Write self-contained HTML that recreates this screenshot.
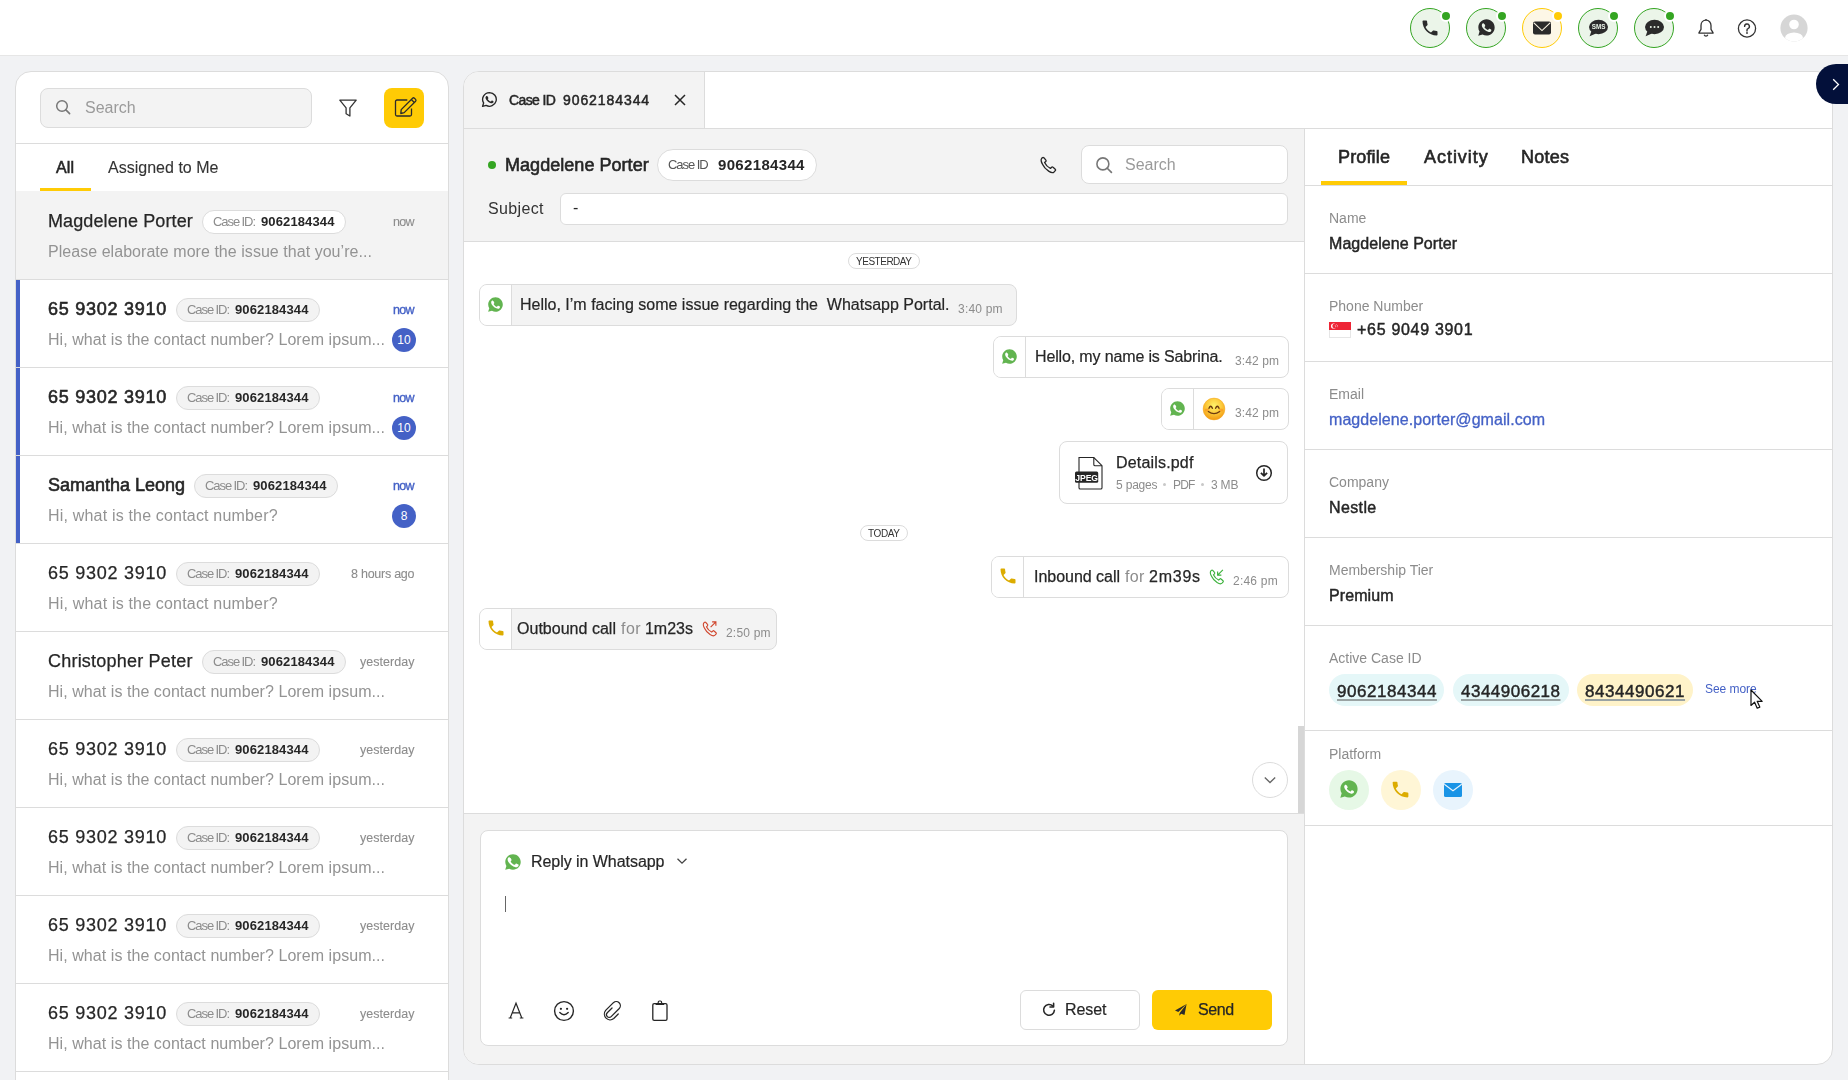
<!DOCTYPE html>
<html><head><meta charset="utf-8"><style>
html,body{margin:0;padding:0;}
body{width:1848px;height:1080px;overflow:hidden;position:relative;background:#f1f2f4;font-family:"Liberation Sans",sans-serif;}
.t{position:absolute;white-space:pre;line-height:1;will-change:transform;}
svg{overflow:visible;will-change:transform;}
</style></head><body>
<div style="position:absolute;left:0px;top:0px;width:1848px;height:55px;background:#fff;border-bottom:1px solid #e6e6e6;"></div>
<div style="position:absolute;left:1410px;top:8px;width:40px;height:40px;box-sizing:border-box;border:1.5px solid #34a522;border-radius:50%;background:#ebf5e9;"></div>
<div style="position:absolute;left:1440px;top:10px;width:12px;height:12px;box-sizing:border-box;border:2px solid #fff;border-radius:50%;background:#34a522;"></div>
<svg style="position:absolute;left:1420px;top:18px;" width="20" height="20" viewBox="0 0 24 24"><path d="M6.62 10.79c1.44 2.83 3.76 5.14 6.59 6.59l2.2-2.2c.27-.27.67-.36 1.02-.24 1.12.37 2.33.57 3.57.57.55 0 1 .45 1 1V20c0 .55-.45 1-1 1-9.39 0-17-7.61-17-17 0-.55.45-1 1-1h3.5c.55 0 1 .45 1 1 0 1.25.2 2.45.57 3.57.11.35.03.74-.25 1.02l-2.2 2.2z" fill="#2b2b2b"/></svg>
<div style="position:absolute;left:1466px;top:8px;width:40px;height:40px;box-sizing:border-box;border:1.5px solid #34a522;border-radius:50%;background:#ebf5e9;"></div>
<div style="position:absolute;left:1496px;top:10px;width:12px;height:12px;box-sizing:border-box;border:2px solid #fff;border-radius:50%;background:#34a522;"></div>
<svg style="position:absolute;left:1477px;top:18px;" width="19" height="19" viewBox="0 0 24 24"><path d="M12 1.6C6.3 1.6 1.7 6.2 1.7 11.9c0 1.9.5 3.7 1.5 5.3L1.6 22.4l5.4-1.5c1.5.8 3.2 1.3 5 1.3 5.7 0 10.3-4.6 10.3-10.3S17.7 1.6 12 1.6z" fill="#2b2b2b"/><path d="M8.4 6.6c.3 0 .5 0 .7.4.2.5.8 1.9.9 2.1.1.2.1.4 0 .6-.1.2-.2.4-.4.6-.2.2-.4.5-.5.6-.2.2-.3.3-.1.7.2.4.9 1.5 2 2.4 1.3 1.2 2.4 1.5 2.8 1.7.4.2.6.1.8-.1.2-.2.9-1 1.1-1.4.2-.4.5-.3.8-.2.3.1 2 .9 2.3 1.1.3.2.6.3.6.4.1.2.1.9-.2 1.7-.3.8-1.7 1.6-2.4 1.7-.6.1-1.4.1-2.3-.2-.5-.2-1.2-.4-2.1-.8-3.6-1.6-6-5.2-6.2-5.5-.2-.2-1.4-1.9-1.4-3.6 0-1.7.9-2.6 1.2-2.9.3-.3.7-.4.9-.4h.5z" fill="#ebf5e9" transform="translate(12 12) scale(0.82) translate(-12 -12)"/></svg>
<div style="position:absolute;left:1522px;top:8px;width:40px;height:40px;box-sizing:border-box;border:1.5px solid #ffcb05;border-radius:50%;background:#fdf7e6;"></div>
<div style="position:absolute;left:1552px;top:10px;width:12px;height:12px;box-sizing:border-box;border:2px solid #fff;border-radius:50%;background:#ffcb05;"></div>
<svg style="position:absolute;left:1533px;top:21px;" width="18" height="14" viewBox="0 0 18 14"><rect x="0" y="0.6" width="18" height="13" rx="2" fill="#2b2b2b"/><path d="M.9 1.8 9 9.6 17.1 1.8" stroke="#fdf7e6" stroke-width="1.1" fill="none"/></svg>
<div style="position:absolute;left:1578px;top:8px;width:40px;height:40px;box-sizing:border-box;border:1.5px solid #34a522;border-radius:50%;background:#ebf5e9;"></div>
<div style="position:absolute;left:1608px;top:10px;width:12px;height:12px;box-sizing:border-box;border:2px solid #fff;border-radius:50%;background:#34a522;"></div>
<svg style="position:absolute;left:1588px;top:19px;" width="20" height="18" viewBox="0 0 20 18"><ellipse cx="10.5" cy="8" rx="9.5" ry="7.2" fill="#2b2b2b"/><path d="M3.5 12 1.6 17.2 8 14.5z" fill="#2b2b2b"/><text x="10.6" y="10.3" font-family="Liberation Sans" font-weight="700" font-size="6.3" fill="#ebf5e9" text-anchor="middle">SMS</text></svg>
<div style="position:absolute;left:1634px;top:8px;width:40px;height:40px;box-sizing:border-box;border:1.5px solid #34a522;border-radius:50%;background:#ebf5e9;"></div>
<div style="position:absolute;left:1664px;top:10px;width:12px;height:12px;box-sizing:border-box;border:2px solid #fff;border-radius:50%;background:#34a522;"></div>
<svg style="position:absolute;left:1644px;top:19px;" width="20" height="18" viewBox="0 0 20 18"><ellipse cx="10.5" cy="8" rx="9.5" ry="7.2" fill="#2b2b2b"/><path d="M3.5 12 1.6 17.2 8 14.5z" fill="#2b2b2b"/><circle cx="6.8" cy="8" r="1" fill="#ebf5e9"/><circle cx="10.5" cy="8" r="1" fill="#ebf5e9"/><circle cx="14.2" cy="8" r="1" fill="#ebf5e9"/></svg>
<svg style="position:absolute;left:1697px;top:18px;" width="18" height="20" viewBox="0 0 18 20"><path d="M9 2.2c-3 0-5 2.3-5 5.3v3.8L2 14.6v.6h14v-.6l-2-3.3V7.5c0-3-2-5.3-5-5.3z" fill="none" stroke="#333" stroke-width="1.3" stroke-linejoin="round"/><path d="M9 1v1.2" stroke="#333" stroke-width="1.3"/><path d="M7.2 16.8a1.9 1.9 0 0 0 3.6 0" fill="none" stroke="#333" stroke-width="1.3"/></svg>
<svg style="position:absolute;left:1737px;top:19px;" width="20" height="19" viewBox="0 0 20 19"><circle cx="10" cy="9.5" r="8.6" fill="none" stroke="#333" stroke-width="1.3"/><path d="M7.6 7.4a2.4 2.4 0 1 1 3.4 2.2c-.7.3-1 .8-1 1.5v.9" fill="none" stroke="#333" stroke-width="1.4" stroke-linecap="round"/><circle cx="10" cy="14" r=".9" fill="#333"/></svg>
<svg style="position:absolute;left:1780px;top:14px;" width="28" height="28" viewBox="0 0 28 28"><defs><clipPath id="av"><circle cx="14" cy="14" r="13.6"/></clipPath></defs><circle cx="14" cy="14" r="13.6" fill="#d6d6d6"/><g clip-path="url(#av)"><circle cx="14" cy="10.5" r="4.8" fill="#fff"/><ellipse cx="14" cy="24" rx="9" ry="5.5" fill="#fff"/></g></svg>
<div style="position:absolute;left:15px;top:71px;width:434px;height:1100px;box-sizing:border-box;border:1px solid #dcdcdc;border-radius:16px;background:#fff;"></div>
<div style="position:absolute;left:40px;top:88px;width:272px;height:40px;box-sizing:border-box;border:1px solid #dcdcdc;border-radius:8px;background:#f3f3f3;"></div>
<svg style="position:absolute;left:55px;top:99px;" width="16" height="16" viewBox="0 0 16 16"><circle cx="7" cy="7" r="5.3" fill="none" stroke="#777" stroke-width="1.5"/><path d="M10.9 10.9 14.6 14.6" stroke="#777" stroke-width="1.6" stroke-linecap="round"/></svg>
<div class="t" style="left:85.00px;top:100.15px;font-size:16px;color:#9a9a9a;">Search</div>
<svg style="position:absolute;left:338px;top:98px;" width="20" height="20" viewBox="0 0 20 20"><path d="M1.8 2.2h16.4l-6.3 7.6v8.2l-3.8-2.2V9.8z" fill="none" stroke="#333" stroke-width="1.3" stroke-linejoin="round"/></svg>
<div style="position:absolute;left:384px;top:88px;width:40px;height:40px;border-radius:8px;background:#ffcb05;"></div>
<svg style="position:absolute;left:394px;top:96px;" width="24" height="22" viewBox="0 0 24 22"><path d="M13.3 4H3A1.5 1.5 0 0 0 1.5 5.5v13A1.5 1.5 0 0 0 3 20h13a1.5 1.5 0 0 0 1.5-1.5v-5.9" fill="none" stroke="#2b2b2b" stroke-width="1.3"/><path d="M7.2 13.6 18.6 2.2a1.3 1.3 0 0 1 1.8 0l1.2 1.2a1.3 1.3 0 0 1 0 1.8L10.2 16.6l-3.4.9z" fill="none" stroke="#2b2b2b" stroke-width="1.3" stroke-linejoin="round"/><path d="M17.3 3.5 20.3 6.5" stroke="#2b2b2b" stroke-width="1.2"/></svg>
<div style="position:absolute;left:15px;top:143px;width:434px;height:1px;background:#dcdcdc;"></div>
<div class="t" style="left:56.00px;top:160.45px;font-size:16px;color:#262626;-webkit-text-stroke:0.55px #262626;letter-spacing:0.100px;">All</div>
<div class="t" style="left:107.50px;top:160.45px;font-size:16px;color:#333;-webkit-text-stroke:0.1px #333;letter-spacing:0.015px;">Assigned to Me</div>
<div style="position:absolute;left:40px;top:188px;width:51px;height:4px;background:#ffcb05;"></div>
<div style="position:absolute;left:16px;top:191px;width:432px;height:88px;background:#f3f3f3;"></div>
<div style="position:absolute;left:16px;top:279px;width:432px;height:1px;background:#dcdcdc;"></div>
<div class="t" style="left:48.00px;top:212.36px;font-size:18px;color:#262626;-webkit-text-stroke:0.25px #262626;letter-spacing:0.113px;">Magdelene Porter</div>
<div style="position:absolute;left:202px;top:210px;width:144px;height:24px;box-sizing:border-box;border:1px solid #dcdcdc;border-radius:12px;background:#fff;"></div>
<div class="t" style="left:213.40px;top:215.09px;font-size:13px;color:#8c8c8c;letter-spacing:-1.079px;">Case ID:</div>
<div class="t" style="left:260.70px;top:215.09px;font-size:13px;color:#262626;font-weight:700;letter-spacing:0.122px;">9062184344</div>
<div class="t" style="left:393.30px;top:216.42px;font-size:12.5px;color:#8c8c8c;-webkit-text-stroke:0.1px #8c8c8c;letter-spacing:-0.750px;">now</div>
<div class="t" style="left:47.80px;top:244.25px;font-size:16px;color:#939393;letter-spacing:0.043px;">Please elaborate more the issue that you’re...</div>
<div style="position:absolute;left:16px;top:280px;width:432px;height:87px;background:#fff;"></div>
<div style="position:absolute;left:16px;top:367px;width:432px;height:1px;background:#dcdcdc;"></div>
<div style="position:absolute;left:16px;top:280px;width:4px;height:87px;background:#4461c6;"></div>
<div class="t" style="left:48.00px;top:300.36px;font-size:18px;color:#262626;-webkit-text-stroke:0.6px #262626;letter-spacing:0.736px;">65 9302 3910</div>
<div style="position:absolute;left:176px;top:298px;width:144px;height:24px;box-sizing:border-box;border:1px solid #dcdcdc;border-radius:12px;background:#f3f3f3;"></div>
<div class="t" style="left:187.40px;top:303.09px;font-size:13px;color:#8c8c8c;letter-spacing:-1.079px;">Case ID:</div>
<div class="t" style="left:234.70px;top:303.09px;font-size:13px;color:#262626;font-weight:700;letter-spacing:0.122px;">9062184344</div>
<div class="t" style="left:393.30px;top:304.42px;font-size:12.5px;color:#4461c6;-webkit-text-stroke:0.35px #4461c6;letter-spacing:-0.750px;">now</div>
<div class="t" style="left:47.80px;top:332.25px;font-size:16px;color:#939393;letter-spacing:0.059px;">Hi, what is the contact number? Lorem ipsum...</div>
<div style="position:absolute;left:392px;top:328px;width:24px;height:24px;border-radius:50%;background:#4461c6;color:#fff;font-size:12px;line-height:24px;text-align:center;">10</div>
<div style="position:absolute;left:16px;top:368px;width:432px;height:87px;background:#fff;"></div>
<div style="position:absolute;left:16px;top:455px;width:432px;height:1px;background:#dcdcdc;"></div>
<div style="position:absolute;left:16px;top:368px;width:4px;height:87px;background:#4461c6;"></div>
<div class="t" style="left:48.00px;top:388.36px;font-size:18px;color:#262626;-webkit-text-stroke:0.6px #262626;letter-spacing:0.736px;">65 9302 3910</div>
<div style="position:absolute;left:176px;top:386px;width:144px;height:24px;box-sizing:border-box;border:1px solid #dcdcdc;border-radius:12px;background:#f3f3f3;"></div>
<div class="t" style="left:187.40px;top:391.09px;font-size:13px;color:#8c8c8c;letter-spacing:-1.079px;">Case ID:</div>
<div class="t" style="left:234.70px;top:391.09px;font-size:13px;color:#262626;font-weight:700;letter-spacing:0.122px;">9062184344</div>
<div class="t" style="left:393.30px;top:392.42px;font-size:12.5px;color:#4461c6;-webkit-text-stroke:0.35px #4461c6;letter-spacing:-0.750px;">now</div>
<div class="t" style="left:47.80px;top:420.25px;font-size:16px;color:#939393;letter-spacing:0.059px;">Hi, what is the contact number? Lorem ipsum...</div>
<div style="position:absolute;left:392px;top:416px;width:24px;height:24px;border-radius:50%;background:#4461c6;color:#fff;font-size:12px;line-height:24px;text-align:center;">10</div>
<div style="position:absolute;left:16px;top:456px;width:432px;height:87px;background:#fff;"></div>
<div style="position:absolute;left:16px;top:543px;width:432px;height:1px;background:#dcdcdc;"></div>
<div style="position:absolute;left:16px;top:456px;width:4px;height:87px;background:#4461c6;"></div>
<div class="t" style="left:48.00px;top:476.36px;font-size:18px;color:#262626;-webkit-text-stroke:0.6px #262626;">Samantha Leong</div>
<div style="position:absolute;left:194px;top:474px;width:144px;height:24px;box-sizing:border-box;border:1px solid #dcdcdc;border-radius:12px;background:#f3f3f3;"></div>
<div class="t" style="left:205.40px;top:479.09px;font-size:13px;color:#8c8c8c;letter-spacing:-1.079px;">Case ID:</div>
<div class="t" style="left:252.70px;top:479.09px;font-size:13px;color:#262626;font-weight:700;letter-spacing:0.122px;">9062184344</div>
<div class="t" style="left:393.30px;top:480.42px;font-size:12.5px;color:#4461c6;-webkit-text-stroke:0.35px #4461c6;letter-spacing:-0.750px;">now</div>
<div class="t" style="left:47.80px;top:508.25px;font-size:16px;color:#939393;letter-spacing:0.183px;">Hi, what is the contact number?</div>
<div style="position:absolute;left:392px;top:504px;width:24px;height:24px;border-radius:50%;background:#4461c6;color:#fff;font-size:12px;line-height:24px;text-align:center;">8</div>
<div style="position:absolute;left:16px;top:544px;width:432px;height:87px;background:#fff;"></div>
<div style="position:absolute;left:16px;top:631px;width:432px;height:1px;background:#dcdcdc;"></div>
<div class="t" style="left:48.00px;top:564.36px;font-size:18px;color:#262626;-webkit-text-stroke:0.25px #262626;letter-spacing:0.736px;">65 9302 3910</div>
<div style="position:absolute;left:176px;top:562px;width:144px;height:24px;box-sizing:border-box;border:1px solid #dcdcdc;border-radius:12px;background:#f3f3f3;"></div>
<div class="t" style="left:187.40px;top:567.09px;font-size:13px;color:#8c8c8c;letter-spacing:-1.079px;">Case ID:</div>
<div class="t" style="left:234.70px;top:567.09px;font-size:13px;color:#262626;font-weight:700;letter-spacing:0.122px;">9062184344</div>
<div class="t" style="left:351.30px;top:568.42px;font-size:12.5px;color:#8c8c8c;-webkit-text-stroke:0.1px #8c8c8c;letter-spacing:-0.250px;">8 hours ago</div>
<div class="t" style="left:47.80px;top:596.25px;font-size:16px;color:#939393;letter-spacing:0.183px;">Hi, what is the contact number?</div>
<div style="position:absolute;left:16px;top:632px;width:432px;height:87px;background:#fff;"></div>
<div style="position:absolute;left:16px;top:719px;width:432px;height:1px;background:#dcdcdc;"></div>
<div class="t" style="left:48.00px;top:652.36px;font-size:18px;color:#262626;-webkit-text-stroke:0.25px #262626;letter-spacing:0.209px;">Christopher Peter</div>
<div style="position:absolute;left:202px;top:650px;width:144px;height:24px;box-sizing:border-box;border:1px solid #dcdcdc;border-radius:12px;background:#f3f3f3;"></div>
<div class="t" style="left:213.40px;top:655.09px;font-size:13px;color:#8c8c8c;letter-spacing:-1.079px;">Case ID:</div>
<div class="t" style="left:260.70px;top:655.09px;font-size:13px;color:#262626;font-weight:700;letter-spacing:0.122px;">9062184344</div>
<div class="t" style="left:360.40px;top:656.42px;font-size:12.5px;color:#8c8c8c;-webkit-text-stroke:0.1px #8c8c8c;letter-spacing:0.025px;">yesterday</div>
<div class="t" style="left:47.80px;top:684.25px;font-size:16px;color:#939393;letter-spacing:0.059px;">Hi, what is the contact number? Lorem ipsum...</div>
<div style="position:absolute;left:16px;top:720px;width:432px;height:87px;background:#fff;"></div>
<div style="position:absolute;left:16px;top:807px;width:432px;height:1px;background:#dcdcdc;"></div>
<div class="t" style="left:48.00px;top:740.36px;font-size:18px;color:#262626;-webkit-text-stroke:0.25px #262626;letter-spacing:0.736px;">65 9302 3910</div>
<div style="position:absolute;left:176px;top:738px;width:144px;height:24px;box-sizing:border-box;border:1px solid #dcdcdc;border-radius:12px;background:#f3f3f3;"></div>
<div class="t" style="left:187.40px;top:743.09px;font-size:13px;color:#8c8c8c;letter-spacing:-1.079px;">Case ID:</div>
<div class="t" style="left:234.70px;top:743.09px;font-size:13px;color:#262626;font-weight:700;letter-spacing:0.122px;">9062184344</div>
<div class="t" style="left:360.40px;top:744.42px;font-size:12.5px;color:#8c8c8c;-webkit-text-stroke:0.1px #8c8c8c;letter-spacing:0.025px;">yesterday</div>
<div class="t" style="left:47.80px;top:772.25px;font-size:16px;color:#939393;letter-spacing:0.059px;">Hi, what is the contact number? Lorem ipsum...</div>
<div style="position:absolute;left:16px;top:808px;width:432px;height:87px;background:#fff;"></div>
<div style="position:absolute;left:16px;top:895px;width:432px;height:1px;background:#dcdcdc;"></div>
<div class="t" style="left:48.00px;top:828.36px;font-size:18px;color:#262626;-webkit-text-stroke:0.25px #262626;letter-spacing:0.736px;">65 9302 3910</div>
<div style="position:absolute;left:176px;top:826px;width:144px;height:24px;box-sizing:border-box;border:1px solid #dcdcdc;border-radius:12px;background:#f3f3f3;"></div>
<div class="t" style="left:187.40px;top:831.09px;font-size:13px;color:#8c8c8c;letter-spacing:-1.079px;">Case ID:</div>
<div class="t" style="left:234.70px;top:831.09px;font-size:13px;color:#262626;font-weight:700;letter-spacing:0.122px;">9062184344</div>
<div class="t" style="left:360.40px;top:832.42px;font-size:12.5px;color:#8c8c8c;-webkit-text-stroke:0.1px #8c8c8c;letter-spacing:0.025px;">yesterday</div>
<div class="t" style="left:47.80px;top:860.25px;font-size:16px;color:#939393;letter-spacing:0.059px;">Hi, what is the contact number? Lorem ipsum...</div>
<div style="position:absolute;left:16px;top:896px;width:432px;height:87px;background:#fff;"></div>
<div style="position:absolute;left:16px;top:983px;width:432px;height:1px;background:#dcdcdc;"></div>
<div class="t" style="left:48.00px;top:916.36px;font-size:18px;color:#262626;-webkit-text-stroke:0.25px #262626;letter-spacing:0.736px;">65 9302 3910</div>
<div style="position:absolute;left:176px;top:914px;width:144px;height:24px;box-sizing:border-box;border:1px solid #dcdcdc;border-radius:12px;background:#f3f3f3;"></div>
<div class="t" style="left:187.40px;top:919.09px;font-size:13px;color:#8c8c8c;letter-spacing:-1.079px;">Case ID:</div>
<div class="t" style="left:234.70px;top:919.09px;font-size:13px;color:#262626;font-weight:700;letter-spacing:0.122px;">9062184344</div>
<div class="t" style="left:360.40px;top:920.42px;font-size:12.5px;color:#8c8c8c;-webkit-text-stroke:0.1px #8c8c8c;letter-spacing:0.025px;">yesterday</div>
<div class="t" style="left:47.80px;top:948.25px;font-size:16px;color:#939393;letter-spacing:0.059px;">Hi, what is the contact number? Lorem ipsum...</div>
<div style="position:absolute;left:16px;top:984px;width:432px;height:87px;background:#fff;"></div>
<div style="position:absolute;left:16px;top:1071px;width:432px;height:1px;background:#dcdcdc;"></div>
<div class="t" style="left:48.00px;top:1004.36px;font-size:18px;color:#262626;-webkit-text-stroke:0.25px #262626;letter-spacing:0.736px;">65 9302 3910</div>
<div style="position:absolute;left:176px;top:1002px;width:144px;height:24px;box-sizing:border-box;border:1px solid #dcdcdc;border-radius:12px;background:#f3f3f3;"></div>
<div class="t" style="left:187.40px;top:1007.09px;font-size:13px;color:#8c8c8c;letter-spacing:-1.079px;">Case ID:</div>
<div class="t" style="left:234.70px;top:1007.09px;font-size:13px;color:#262626;font-weight:700;letter-spacing:0.122px;">9062184344</div>
<div class="t" style="left:360.40px;top:1008.42px;font-size:12.5px;color:#8c8c8c;-webkit-text-stroke:0.1px #8c8c8c;letter-spacing:0.025px;">yesterday</div>
<div class="t" style="left:47.80px;top:1036.25px;font-size:16px;color:#939393;letter-spacing:0.059px;">Hi, what is the contact number? Lorem ipsum...</div>
<div style="position:absolute;left:463px;top:71px;width:1370px;height:994px;box-sizing:border-box;border:1px solid #dcdcdc;border-radius:16px;background:#fff;overflow:hidden;">
<div style="position:absolute;left:-1px;top:-1px;width:241px;height:57px;background:#f3f3f3;border-right:1px solid #dcdcdc;"></div>
<div style="position:absolute;left:-1px;top:56px;width:1370px;height:1px;background:#dcdcdc;"></div>
<svg style="position:absolute;left:17px;top:19px;" width="17" height="17" viewBox="0 0 24 24"><path d="M12 2.2a9.7 9.7 0 0 0-8.3 14.7L2.2 21.8l5-1.4A9.7 9.7 0 1 0 12 2.2z" fill="none" stroke="#262626" stroke-width="1.9" stroke-linejoin="round"/><path d="M8.4 6.6c.3 0 .5 0 .7.4.2.5.8 1.9.9 2.1.1.2.1.4 0 .6-.1.2-.2.4-.4.6-.2.2-.4.5-.5.6-.2.2-.3.3-.1.7.2.4.9 1.5 2 2.4 1.3 1.2 2.4 1.5 2.8 1.7.4.2.6.1.8-.1.2-.2.9-1 1.1-1.4.2-.4.5-.3.8-.2.3.1 2 .9 2.3 1.1.3.2.6.3.6.4.1.2.1.9-.2 1.7-.3.8-1.7 1.6-2.4 1.7-.6.1-1.4.1-2.3-.2-.5-.2-1.2-.4-2.1-.8-3.6-1.6-6-5.2-6.2-5.5-.2-.2-1.4-1.9-1.4-3.6 0-1.7.9-2.6 1.2-2.9.3-.3.7-.4.9-.4h.5z" fill="#262626" transform="translate(12 12) scale(.78) translate(-12 -12)"/></svg>
<div class="t" style="left:44.50px;top:20.95px;font-size:14px;color:#262626;-webkit-text-stroke:0.5px #262626;letter-spacing:-0.625px;">Case ID</div>
<div class="t" style="left:98.60px;top:20.95px;font-size:14px;color:#262626;-webkit-text-stroke:0.5px #262626;letter-spacing:0.917px;">9062184344</div>
<svg style="position:absolute;left:210px;top:22px;" width="12" height="12" viewBox="0 0 12 12"><path d="M1 1 11 11M11 1 1 11" stroke="#262626" stroke-width="1.5"/></svg>
<div style="position:absolute;left:-1px;top:57px;width:841px;height:112px;background:#f3f3f3;"></div>
<div style="position:absolute;left:-1px;top:169px;width:841px;height:1px;background:#dcdcdc;"></div>
<div style="position:absolute;left:24px;top:89px;width:8px;height:8px;border-radius:50%;background:#34a522;"></div>
<div class="t" style="left:40.80px;top:83.56px;font-size:18px;color:#262626;-webkit-text-stroke:0.6px #262626;letter-spacing:0.040px;">Magdelene Porter</div>
<div style="position:absolute;left:193px;top:77px;width:160px;height:32px;box-sizing:border-box;border:1px solid #dcdcdc;border-radius:16px;background:#fff;"></div>
<div class="t" style="left:204.40px;top:85.79px;font-size:13px;color:#555;letter-spacing:-1.058px;">Case ID</div>
<div class="t" style="left:254.40px;top:84.60px;font-size:15px;color:#262626;font-weight:700;letter-spacing:0.333px;">9062184344</div>
<svg style="position:absolute;left:574px;top:83px;" width="20" height="20" viewBox="0 0 24 24"><path d="M5.2 3.3c.5-.5 1.3-.5 1.8 0l2.3 2.6c.5.5.5 1.3 0 1.8L7.9 9.1c1.3 2.8 4.2 5.8 7 7l1.4-1.4c.5-.5 1.3-.5 1.8 0l2.6 2.3c.5.5.5 1.3 0 1.8l-1.4 1.5c-1 1-3.3 1.2-6.5-.9C9.5 17.1 6.9 14.5 5.6 11.4 3.6 8 3.7 5.1 4.3 4.2z" fill="none" stroke="#262626" stroke-width="1.6" stroke-linejoin="round"/></svg>
<div style="position:absolute;left:617px;top:73px;width:207px;height:39px;box-sizing:border-box;border:1px solid #dcdcdc;border-radius:8px;background:#fff;"></div>
<svg style="position:absolute;left:631px;top:84px;" width="18" height="18" viewBox="0 0 16 16"><circle cx="7" cy="7" r="5.3" fill="none" stroke="#777" stroke-width="1.4"/><path d="M10.9 10.9 14.6 14.6" stroke="#777" stroke-width="1.5" stroke-linecap="round"/></svg>
<div class="t" style="left:660.50px;top:84.95px;font-size:16px;color:#9a9a9a;">Search</div>
<div class="t" style="left:24.00px;top:128.75px;font-size:16px;color:#333;letter-spacing:0.342px;">Subject</div>
<div style="position:absolute;left:96px;top:121px;width:728px;height:32px;box-sizing:border-box;border:1px solid #dcdcdc;border-radius:6px;background:#fff;"></div>
<div class="t" style="left:109.00px;top:128.45px;font-size:16px;color:#262626;">-</div>
<div style="position:absolute;left:384px;top:181px;width:72px;height:16px;box-sizing:border-box;border:1px solid #dcdcdc;border-radius:8px;background:#fff;"></div>
<div class="t" style="left:392.00px;top:184.53px;font-size:10px;color:#333;letter-spacing:-0.481px;">YESTERDAY</div>
<div style="position:absolute;left:396px;top:453px;width:48px;height:16px;box-sizing:border-box;border:1px solid #dcdcdc;border-radius:8px;background:#fff;"></div>
<div class="t" style="left:404.00px;top:456.53px;font-size:10px;color:#333;letter-spacing:-0.387px;">TODAY</div>
<div style="position:absolute;left:15px;top:212px;width:538px;height:42px;box-sizing:border-box;border:1px solid #dcdcdc;border-radius:8px;background:#f3f3f3;overflow:hidden;"><div style="position:absolute;left:0;top:0;width:31px;height:100%;background:#fff;border-right:1px solid #dcdcdc;"></div></div>
<svg style="position:absolute;left:23px;top:224px;" width="17" height="17" viewBox="0 0 24 24"><path d="M12 1.6C6.3 1.6 1.7 6.2 1.7 11.9c0 1.9.5 3.7 1.5 5.3L1.6 22.4l5.4-1.5c1.5.8 3.2 1.3 5 1.3 5.7 0 10.3-4.6 10.3-10.3S17.7 1.6 12 1.6z" fill="#62b450"/><path d="M8.4 6.6c.3 0 .5 0 .7.4.2.5.8 1.9.9 2.1.1.2.1.4 0 .6-.1.2-.2.4-.4.6-.2.2-.4.5-.5.6-.2.2-.3.3-.1.7.2.4.9 1.5 2 2.4 1.3 1.2 2.4 1.5 2.8 1.7.4.2.6.1.8-.1.2-.2.9-1 1.1-1.4.2-.4.5-.3.8-.2.3.1 2 .9 2.3 1.1.3.2.6.3.6.4.1.2.1.9-.2 1.7-.3.8-1.7 1.6-2.4 1.7-.6.1-1.4.1-2.3-.2-.5-.2-1.2-.4-2.1-.8-3.6-1.6-6-5.2-6.2-5.5-.2-.2-1.4-1.9-1.4-3.6 0-1.7.9-2.6 1.2-2.9.3-.3.7-.4.9-.4h.5z" fill="#fff" transform="translate(12 12) scale(0.85) translate(-12 -12)"/></svg>
<div class="t" style="left:56.30px;top:225.05px;font-size:16px;color:#262626;-webkit-text-stroke:0.2px #262626;">Hello, I’m facing some issue regarding the  Whatsapp Portal.</div>
<div class="t" style="left:494.40px;top:230.84px;font-size:12px;color:#8c8c8c;letter-spacing:0.208px;">3:40 pm</div>
<div style="position:absolute;left:529px;top:264px;width:296px;height:42px;box-sizing:border-box;border:1px solid #dcdcdc;border-radius:8px;background:#fff;overflow:hidden;"><div style="position:absolute;left:0;top:0;width:31px;height:100%;background:#fff;border-right:1px solid #dcdcdc;"></div></div>
<svg style="position:absolute;left:537px;top:276px;" width="17" height="17" viewBox="0 0 24 24"><path d="M12 1.6C6.3 1.6 1.7 6.2 1.7 11.9c0 1.9.5 3.7 1.5 5.3L1.6 22.4l5.4-1.5c1.5.8 3.2 1.3 5 1.3 5.7 0 10.3-4.6 10.3-10.3S17.7 1.6 12 1.6z" fill="#62b450"/><path d="M8.4 6.6c.3 0 .5 0 .7.4.2.5.8 1.9.9 2.1.1.2.1.4 0 .6-.1.2-.2.4-.4.6-.2.2-.4.5-.5.6-.2.2-.3.3-.1.7.2.4.9 1.5 2 2.4 1.3 1.2 2.4 1.5 2.8 1.7.4.2.6.1.8-.1.2-.2.9-1 1.1-1.4.2-.4.5-.3.8-.2.3.1 2 .9 2.3 1.1.3.2.6.3.6.4.1.2.1.9-.2 1.7-.3.8-1.7 1.6-2.4 1.7-.6.1-1.4.1-2.3-.2-.5-.2-1.2-.4-2.1-.8-3.6-1.6-6-5.2-6.2-5.5-.2-.2-1.4-1.9-1.4-3.6 0-1.7.9-2.6 1.2-2.9.3-.3.7-.4.9-.4h.5z" fill="#fff" transform="translate(12 12) scale(0.85) translate(-12 -12)"/></svg>
<div class="t" style="left:570.60px;top:277.05px;font-size:16px;color:#262626;-webkit-text-stroke:0.2px #262626;letter-spacing:-0.144px;">Hello, my name is Sabrina.</div>
<div class="t" style="left:770.60px;top:282.84px;font-size:12px;color:#8c8c8c;letter-spacing:0.125px;">3:42 pm</div>
<div style="position:absolute;left:697px;top:316px;width:128px;height:42px;box-sizing:border-box;border:1px solid #dcdcdc;border-radius:8px;background:#fff;overflow:hidden;"><div style="position:absolute;left:0;top:0;width:31px;height:100%;background:#fff;border-right:1px solid #dcdcdc;"></div></div>
<svg style="position:absolute;left:705px;top:328px;" width="17" height="17" viewBox="0 0 24 24"><path d="M12 1.6C6.3 1.6 1.7 6.2 1.7 11.9c0 1.9.5 3.7 1.5 5.3L1.6 22.4l5.4-1.5c1.5.8 3.2 1.3 5 1.3 5.7 0 10.3-4.6 10.3-10.3S17.7 1.6 12 1.6z" fill="#62b450"/><path d="M8.4 6.6c.3 0 .5 0 .7.4.2.5.8 1.9.9 2.1.1.2.1.4 0 .6-.1.2-.2.4-.4.6-.2.2-.4.5-.5.6-.2.2-.3.3-.1.7.2.4.9 1.5 2 2.4 1.3 1.2 2.4 1.5 2.8 1.7.4.2.6.1.8-.1.2-.2.9-1 1.1-1.4.2-.4.5-.3.8-.2.3.1 2 .9 2.3 1.1.3.2.6.3.6.4.1.2.1.9-.2 1.7-.3.8-1.7 1.6-2.4 1.7-.6.1-1.4.1-2.3-.2-.5-.2-1.2-.4-2.1-.8-3.6-1.6-6-5.2-6.2-5.5-.2-.2-1.4-1.9-1.4-3.6 0-1.7.9-2.6 1.2-2.9.3-.3.7-.4.9-.4h.5z" fill="#fff" transform="translate(12 12) scale(0.85) translate(-12 -12)"/></svg>
<svg style="position:absolute;left:738px;top:325px;" width="24" height="24" viewBox="0 0 24 24"><defs><radialGradient id="emg" cx="50%" cy="35%" r="65%"><stop offset="0" stop-color="#fff36b"/><stop offset=".55" stop-color="#fcc93a"/><stop offset="1" stop-color="#f29a12"/></radialGradient></defs><circle cx="12" cy="12" r="10.9" fill="url(#emg)" stroke="#f4a51c" stroke-width=".5"/><ellipse cx="5" cy="13" rx="2.2" ry="1.5" fill="#f7891a" opacity=".55"/><ellipse cx="19" cy="13" rx="2.2" ry="1.5" fill="#f7891a" opacity=".55"/><path d="M7 11.3q1.7-4 3.4 0M13.6 11.3q1.7-4 3.4 0" stroke="#6b3a0f" stroke-width="1.4" fill="none" stroke-linecap="round"/><path d="M6.3 14.6q5.7 4.2 11.4 0" stroke="#6b3a0f" stroke-width="1.3" fill="none" stroke-linecap="round"/></svg>
<div class="t" style="left:770.60px;top:334.74px;font-size:12px;color:#8c8c8c;letter-spacing:0.125px;">3:42 pm</div>
<div style="position:absolute;left:595px;top:369px;width:229px;height:63px;box-sizing:border-box;border:1px solid #dcdcdc;border-radius:8px;background:#fff;"></div>
<svg style="position:absolute;left:610px;top:384px;" width="30" height="34" viewBox="0 0 30 34"><path d="M5 1.5h14.8l8.2 8.2v22c0 .7-.6 1.3-1.3 1.3H6.3c-.7 0-1.3-.6-1.3-1.3z" fill="#fff" stroke="#262626" stroke-width="1.1"/><path d="M19.8 1.5v6.9c0 .7.6 1.3 1.3 1.3H28" fill="none" stroke="#262626" stroke-width="1.1"/><rect x="1" y="15.6" width="23.2" height="11.2" rx="1.5" fill="#262626"/><text x="12.6" y="24.5" font-family="Liberation Sans" font-weight="700" font-size="8.6" fill="#fff" text-anchor="middle">JPEG</text></svg>
<div class="t" style="left:651.60px;top:383.15px;font-size:16px;color:#262626;-webkit-text-stroke:0.25px #262626;letter-spacing:0.175px;">Details.pdf</div>
<div class="t" style="left:651.60px;top:407.04px;font-size:12px;color:#8c8c8c;letter-spacing:-0.183px;">5 pages</div>
<div style="position:absolute;left:699px;top:411px;width:3px;height:3px;border-radius:50%;background:#c8c8c8;"></div>
<div class="t" style="left:709.40px;top:407.04px;font-size:12px;color:#8c8c8c;letter-spacing:-0.850px;">PDF</div>
<div style="position:absolute;left:737px;top:411px;width:3px;height:3px;border-radius:50%;background:#c8c8c8;"></div>
<div class="t" style="left:747.30px;top:407.04px;font-size:12px;color:#8c8c8c;letter-spacing:-0.200px;">3 MB</div>
<svg style="position:absolute;left:791px;top:392px;" width="18" height="18" viewBox="0 0 18 18"><circle cx="9" cy="9" r="7.3" fill="none" stroke="#262626" stroke-width="1.5"/><path d="M9 4.6v7.2M5.9 8.8 9 11.9l3.1-3.1" fill="none" stroke="#262626" stroke-width="1.7" stroke-linejoin="round"/></svg>
<div style="position:absolute;left:527px;top:484px;width:298px;height:42px;box-sizing:border-box;border:1px solid #dcdcdc;border-radius:8px;background:#fff;overflow:hidden;"><div style="position:absolute;left:0;top:0;width:31px;height:100%;background:#fff;border-right:1px solid #dcdcdc;"></div></div>
<svg style="position:absolute;left:534px;top:494px;" width="20" height="20" viewBox="0 0 24 24"><path d="M6.62 10.79c1.44 2.83 3.76 5.14 6.59 6.59l2.2-2.2c.27-.27.67-.36 1.02-.24 1.12.37 2.33.57 3.57.57.55 0 1 .45 1 1V20c0 .55-.45 1-1 1-9.39 0-17-7.61-17-17 0-.55.45-1 1-1h3.5c.55 0 1 .45 1 1 0 1.25.2 2.45.57 3.57.11.35.03.74-.25 1.02l-2.2 2.2z" fill="#dcac00"/></svg>
<div class="t" style="left:570.00px;top:497.45px;font-size:16px;color:#262626;-webkit-text-stroke:0.25px #262626;letter-spacing:-0.027px;">Inbound call</div>
<div class="t" style="left:660.60px;top:497.45px;font-size:16px;color:#8c8c8c;letter-spacing:0.375px;">for</div>
<div class="t" style="left:684.60px;top:497.45px;font-size:16px;color:#262626;-webkit-text-stroke:0.25px #262626;letter-spacing:0.775px;">2m39s</div>
<svg style="position:absolute;left:743px;top:496px;" width="19" height="18" viewBox="0 0 24 24"><path d="M5.2 3.3c.5-.5 1.3-.5 1.8 0l2.3 2.6c.5.5.5 1.3 0 1.8L7.9 9.1c1.3 2.8 4.2 5.8 7 7l1.4-1.4c.5-.5 1.3-.5 1.8 0l2.6 2.3c.5.5.5 1.3 0 1.8l-1.4 1.5c-1 1-3.3 1.2-6.5-.9C9.5 17.1 6.9 14.5 5.6 11.4 3.6 8 3.7 5.1 4.3 4.2z" fill="none" stroke="#3bb13b" stroke-width="1.5" stroke-linejoin="round"/><path d="M20.5 2.5 13.5 9.5M13.5 4.5v5h5" fill="none" stroke="#3bb13b" stroke-width="1.5"/></svg>
<div class="t" style="left:769.00px;top:503.04px;font-size:12px;color:#8c8c8c;letter-spacing:0.225px;">2:46 pm</div>
<div style="position:absolute;left:15px;top:536px;width:298px;height:42px;box-sizing:border-box;border:1px solid #dcdcdc;border-radius:8px;background:#f3f3f3;overflow:hidden;"><div style="position:absolute;left:0;top:0;width:31px;height:100%;background:#fff;border-right:1px solid #dcdcdc;"></div></div>
<svg style="position:absolute;left:22px;top:546px;" width="20" height="20" viewBox="0 0 24 24"><path d="M6.62 10.79c1.44 2.83 3.76 5.14 6.59 6.59l2.2-2.2c.27-.27.67-.36 1.02-.24 1.12.37 2.33.57 3.57.57.55 0 1 .45 1 1V20c0 .55-.45 1-1 1-9.39 0-17-7.61-17-17 0-.55.45-1 1-1h3.5c.55 0 1 .45 1 1 0 1.25.2 2.45.57 3.57.11.35.03.74-.25 1.02l-2.2 2.2z" fill="#dcac00"/></svg>
<div class="t" style="left:53.00px;top:548.85px;font-size:16px;color:#262626;-webkit-text-stroke:0.25px #262626;letter-spacing:0.021px;">Outbound call</div>
<div class="t" style="left:156.60px;top:548.85px;font-size:16px;color:#8c8c8c;letter-spacing:0.475px;">for</div>
<div class="t" style="left:180.80px;top:548.85px;font-size:16px;color:#262626;-webkit-text-stroke:0.25px #262626;letter-spacing:-0.025px;">1m23s</div>
<svg style="position:absolute;left:236px;top:548px;" width="19" height="18" viewBox="0 0 24 24"><path d="M5.2 3.3c.5-.5 1.3-.5 1.8 0l2.3 2.6c.5.5.5 1.3 0 1.8L7.9 9.1c1.3 2.8 4.2 5.8 7 7l1.4-1.4c.5-.5 1.3-.5 1.8 0l2.6 2.3c.5.5.5 1.3 0 1.8l-1.4 1.5c-1 1-3.3 1.2-6.5-.9C9.5 17.1 6.9 14.5 5.6 11.4 3.6 8 3.7 5.1 4.3 4.2z" fill="none" stroke="#d0452c" stroke-width="1.5" stroke-linejoin="round"/><path d="M13.5 9.5 20.5 2.5M15.5 2.5h5v5" fill="none" stroke="#d0452c" stroke-width="1.5"/></svg>
<div class="t" style="left:261.80px;top:554.74px;font-size:12px;color:#8c8c8c;letter-spacing:0.192px;">2:50 pm</div>
<div style="position:absolute;left:788px;top:690px;width:36px;height:36px;box-sizing:border-box;border:1px solid #dcdcdc;border-radius:50%;background:#fff;"></div>
<svg style="position:absolute;left:800px;top:703px;" width="12" height="10" viewBox="0 0 12 10"><path d="M.8 2.5 6 7.5l5.2-5" fill="none" stroke="#666" stroke-width="1.3"/></svg>
<div style="position:absolute;left:834px;top:654px;width:6px;height:87px;background:#d6d6d6;"></div>
<div style="position:absolute;left:-1px;top:741px;width:841px;height:1px;background:#dcdcdc;"></div>
<div style="position:absolute;left:-1px;top:742px;width:841px;height:250px;background:#f3f3f3;"></div>
<div style="position:absolute;left:16px;top:758px;width:808px;height:216px;box-sizing:border-box;border:1px solid #dcdcdc;border-radius:8px;background:#fff;"></div>
<svg style="position:absolute;left:40px;top:781px;" width="18" height="18" viewBox="0 0 24 24"><path d="M12 1.6C6.3 1.6 1.7 6.2 1.7 11.9c0 1.9.5 3.7 1.5 5.3L1.6 22.4l5.4-1.5c1.5.8 3.2 1.3 5 1.3 5.7 0 10.3-4.6 10.3-10.3S17.7 1.6 12 1.6z" fill="#62b450"/><path d="M8.4 6.6c.3 0 .5 0 .7.4.2.5.8 1.9.9 2.1.1.2.1.4 0 .6-.1.2-.2.4-.4.6-.2.2-.4.5-.5.6-.2.2-.3.3-.1.7.2.4.9 1.5 2 2.4 1.3 1.2 2.4 1.5 2.8 1.7.4.2.6.1.8-.1.2-.2.9-1 1.1-1.4.2-.4.5-.3.8-.2.3.1 2 .9 2.3 1.1.3.2.6.3.6.4.1.2.1.9-.2 1.7-.3.8-1.7 1.6-2.4 1.7-.6.1-1.4.1-2.3-.2-.5-.2-1.2-.4-2.1-.8-3.6-1.6-6-5.2-6.2-5.5-.2-.2-1.4-1.9-1.4-3.6 0-1.7.9-2.6 1.2-2.9.3-.3.7-.4.9-.4h.5z" fill="#fff" transform="translate(12 12) scale(1.0) translate(-12 -12)"/></svg>
<div class="t" style="left:67.30px;top:782.45px;font-size:16px;color:#262626;-webkit-text-stroke:0.2px #262626;letter-spacing:-0.050px;">Reply in Whatsapp</div>
<svg style="position:absolute;left:212px;top:785px;" width="12" height="8" viewBox="0 0 12 8"><path d="M1.5 1.8 6 6.2l4.5-4.4" fill="none" stroke="#444" stroke-width="1.3"/></svg>
<div style="position:absolute;left:41px;top:824px;width:1px;height:16px;background:#666;"></div>
<svg style="position:absolute;left:44px;top:930px;" width="16" height="17" viewBox="0 0 16 17"><path d="M2.2 16 8 1.2 13.8 16M4.2 10.8h7.6M0.6 16h3.6M11.8 16h3.6" fill="none" stroke="#262626" stroke-width="1.15"/></svg>
<svg style="position:absolute;left:89px;top:928px;" width="22" height="22" viewBox="0 0 22 22"><circle cx="11" cy="11" r="9.4" fill="none" stroke="#262626" stroke-width="1.4"/><circle cx="7.9" cy="8.8" r="1.1" fill="#262626"/><circle cx="14.1" cy="8.8" r="1.1" fill="#262626"/><path d="M6.8 12.6q4.2 4.4 8.4 0" fill="none" stroke="#262626" stroke-width="1.4" stroke-linecap="round"/></svg>
<svg style="position:absolute;left:137.5px;top:928px;" width="22" height="23" viewBox="0 0 22 23"><path d="M9.5 7.2 4.2 12.5a3 3 0 0 0 4.3 4.3l9-9a4.6 4.6 0 0 0-6.5-6.5L2.4 9.9a6.4 6.4 0 0 0 9 9l5-5" fill="none" stroke="#262626" stroke-width="1.4" stroke-linecap="round" transform="translate(1.5 1.5) scale(.9)"/></svg>
<svg style="position:absolute;left:186px;top:927px;" width="18" height="23" viewBox="0 0 18 23"><rect x="2.8" y="4.6" width="14.2" height="16.8" rx="1.4" fill="none" stroke="#262626" stroke-width="1.3"/><path d="M5.6 5.2h8.6" stroke="#262626" stroke-width="1.6"/><rect x="8.2" y="2" width="3.4" height="3" rx="1.2" fill="none" stroke="#262626" stroke-width="1.2"/></svg>
<div style="position:absolute;left:556px;top:918px;width:120px;height:40px;box-sizing:border-box;border:1px solid #dcdcdc;border-radius:6px;background:#fff;"></div>
<svg style="position:absolute;left:577px;top:930px;" width="16" height="16" viewBox="0 0 16 16"><path d="M13.4 8.2A5.4 5.4 0 1 1 11.8 4" fill="none" stroke="#262626" stroke-width="1.6" stroke-linecap="round"/><path d="M12.6 1.4v3.6H9" fill="none" stroke="#262626" stroke-width="1.6" stroke-linejoin="round" stroke-linecap="round"/></svg>
<div class="t" style="left:600.50px;top:929.55px;font-size:16px;color:#262626;-webkit-text-stroke:0.2px #262626;letter-spacing:-0.075px;">Reset</div>
<div style="position:absolute;left:688px;top:918px;width:120px;height:40px;border-radius:6px;background:#ffcb05;"></div>
<svg style="position:absolute;left:710px;top:931px;" width="14" height="14" viewBox="0 0 14 14"><path d="M12.6 1 1 7.4 4.3 9.1z" fill="#2b2b2b"/><path d="M12.6 1 5.7 9.9 5.1 12.8 7.3 10.7 10.5 11.9z" fill="#2b2b2b"/></svg>
<div class="t" style="left:733.50px;top:929.55px;font-size:16px;color:#262626;-webkit-text-stroke:0.25px #262626;letter-spacing:-0.383px;">Send</div>
<div style="position:absolute;left:840px;top:57px;width:1px;height:935px;background:#dcdcdc;"></div>
<div style="position:absolute;left:841px;top:113px;width:527px;height:1px;background:#dcdcdc;"></div>
<div class="t" style="left:873.70px;top:75.56px;font-size:18px;color:#262626;-webkit-text-stroke:0.6px #262626;letter-spacing:0.150px;">Profile</div>
<div class="t" style="left:959.70px;top:75.56px;font-size:18px;color:#262626;-webkit-text-stroke:0.6px #262626;letter-spacing:0.957px;">Activity</div>
<div class="t" style="left:1056.60px;top:75.56px;font-size:18px;color:#262626;-webkit-text-stroke:0.6px #262626;letter-spacing:0.275px;">Notes</div>
<div style="position:absolute;left:857px;top:109px;width:86px;height:4px;background:#ffcb05;"></div>
<div class="t" style="left:865.00px;top:138.55px;font-size:14px;color:#8c8c8c;">Name</div>
<div style="position:absolute;left:841px;top:201px;width:527px;height:1px;background:#dcdcdc;"></div>
<div class="t" style="left:865.00px;top:226.55px;font-size:14px;color:#8c8c8c;">Phone Number</div>
<div style="position:absolute;left:841px;top:289px;width:527px;height:1px;background:#dcdcdc;"></div>
<div class="t" style="left:865.00px;top:314.55px;font-size:14px;color:#8c8c8c;">Email</div>
<div style="position:absolute;left:841px;top:377px;width:527px;height:1px;background:#dcdcdc;"></div>
<div class="t" style="left:865.00px;top:402.55px;font-size:14px;color:#8c8c8c;">Company</div>
<div style="position:absolute;left:841px;top:465px;width:527px;height:1px;background:#dcdcdc;"></div>
<div class="t" style="left:865.00px;top:490.55px;font-size:14px;color:#8c8c8c;">Membership Tier</div>
<div style="position:absolute;left:841px;top:553px;width:527px;height:1px;background:#dcdcdc;"></div>
<div class="t" style="left:865.00px;top:163.65px;font-size:16px;color:#262626;-webkit-text-stroke:0.45px #262626;letter-spacing:0.053px;">Magdelene Porter</div>
<svg style="position:absolute;left:865px;top:250px;" width="22" height="16" viewBox="0 0 22 16"><rect x="0.5" y="0.5" width="21" height="15" fill="#fff" stroke="#e6e6e6"/><rect x="0" y="0" width="22" height="8" fill="#ee2536"/><circle cx="4.6" cy="4" r="2.6" fill="#fff"/><circle cx="5.6" cy="4" r="2.3" fill="#ee2536"/><g fill="#fff"><circle cx="7.3" cy="2.6" r=".45"/><circle cx="8.6" cy="3.4" r=".45"/><circle cx="8.2" cy="4.8" r=".45"/><circle cx="6.6" cy="4.8" r=".45"/><circle cx="6.2" cy="3.4" r=".45"/></g></svg>
<div class="t" style="left:893.00px;top:249.65px;font-size:16px;color:#262626;-webkit-text-stroke:0.45px #262626;letter-spacing:0.700px;">+65 9049 3901</div>
<div class="t" style="left:865.00px;top:339.65px;font-size:16px;color:#4461c6;-webkit-text-stroke:0.3px #4461c6;letter-spacing:0.058px;">magdelene.porter@gmail.com</div>
<div class="t" style="left:865.00px;top:427.75px;font-size:16px;color:#262626;-webkit-text-stroke:0.45px #262626;letter-spacing:0.370px;">Nestle</div>
<div class="t" style="left:865.00px;top:515.95px;font-size:16px;color:#262626;-webkit-text-stroke:0.45px #262626;letter-spacing:0.083px;">Premium</div>
<div class="t" style="left:865.00px;top:579.35px;font-size:14px;color:#8c8c8c;">Active Case ID</div>
<div style="position:absolute;left:865px;top:602px;width:115px;height:32px;border-radius:16px;background:#e5f7f8;"></div>
<div style="position:absolute;left:989px;top:602px;width:116px;height:32px;border-radius:16px;background:#e5f7f8;"></div>
<div style="position:absolute;left:1113px;top:602px;width:116px;height:32px;border-radius:16px;background:#fff3c9;"></div>
<div class="t" style="left:873.00px;top:611.11px;font-size:17px;color:#262626;-webkit-text-stroke:0.45px #262626;letter-spacing:0.539px;text-decoration:underline;text-underline-offset:2px;text-decoration-thickness:1.5px;text-decoration-color:#9aa3a3;">9062184344</div>
<div class="t" style="left:997.00px;top:611.11px;font-size:17px;color:#262626;-webkit-text-stroke:0.45px #262626;letter-spacing:0.494px;text-decoration:underline;text-underline-offset:2px;text-decoration-thickness:1.5px;text-decoration-color:#9aa3a3;">4344906218</div>
<div class="t" style="left:1121.00px;top:611.11px;font-size:17px;color:#262626;-webkit-text-stroke:0.45px #262626;letter-spacing:0.550px;text-decoration:underline;text-underline-offset:2px;text-decoration-thickness:1.5px;text-decoration-color:#9aa3a3;">8434490621</div>
<div class="t" style="left:1241.00px;top:610.84px;font-size:12px;color:#4461c6;letter-spacing:-0.050px;">See more</div>
<svg style="position:absolute;left:1286px;top:617px;" width="14" height="21" viewBox="0 0 14 21"><path d="M1 1v15.5l3.6-3.3 2.6 6 2.6-1.1-2.6-5.8h5z" fill="#fff" stroke="#111" stroke-width="1.2" stroke-linejoin="round"/></svg>
<div style="position:absolute;left:841px;top:658px;width:527px;height:1px;background:#dcdcdc;"></div>
<div class="t" style="left:865.00px;top:674.95px;font-size:14px;color:#8c8c8c;">Platform</div>
<div style="position:absolute;left:865px;top:698px;width:40px;height:40px;border-radius:50%;background:#e6f8e6;"></div>
<svg style="position:absolute;left:875px;top:707px;" width="20" height="20" viewBox="0 0 24 24"><path d="M12 1.6C6.3 1.6 1.7 6.2 1.7 11.9c0 1.9.5 3.7 1.5 5.3L1.6 22.4l5.4-1.5c1.5.8 3.2 1.3 5 1.3 5.7 0 10.3-4.6 10.3-10.3S17.7 1.6 12 1.6z" fill="#62b450"/><path d="M8.4 6.6c.3 0 .5 0 .7.4.2.5.8 1.9.9 2.1.1.2.1.4 0 .6-.1.2-.2.4-.4.6-.2.2-.4.5-.5.6-.2.2-.3.3-.1.7.2.4.9 1.5 2 2.4 1.3 1.2 2.4 1.5 2.8 1.7.4.2.6.1.8-.1.2-.2.9-1 1.1-1.4.2-.4.5-.3.8-.2.3.1 2 .9 2.3 1.1.3.2.6.3.6.4.1.2.1.9-.2 1.7-.3.8-1.7 1.6-2.4 1.7-.6.1-1.4.1-2.3-.2-.5-.2-1.2-.4-2.1-.8-3.6-1.6-6-5.2-6.2-5.5-.2-.2-1.4-1.9-1.4-3.6 0-1.7.9-2.6 1.2-2.9.3-.3.7-.4.9-.4h.5z" fill="#fff" transform="translate(12 12) scale(0.8) translate(-12 -12)"/></svg>
<div style="position:absolute;left:917px;top:698px;width:40px;height:40px;border-radius:50%;background:#fff6d6;"></div>
<svg style="position:absolute;left:926px;top:707px;" width="21" height="21" viewBox="0 0 24 24"><path d="M6.62 10.79c1.44 2.83 3.76 5.14 6.59 6.59l2.2-2.2c.27-.27.67-.36 1.02-.24 1.12.37 2.33.57 3.57.57.55 0 1 .45 1 1V20c0 .55-.45 1-1 1-9.39 0-17-7.61-17-17 0-.55.45-1 1-1h3.5c.55 0 1 .45 1 1 0 1.25.2 2.45.57 3.57.11.35.03.74-.25 1.02l-2.2 2.2z" fill="#dcac00"/></svg>
<div style="position:absolute;left:969px;top:698px;width:40px;height:40px;border-radius:50%;background:#e8f4fd;"></div>
<svg style="position:absolute;left:980px;top:711px;" width="18" height="14" viewBox="0 0 18 14"><rect x="0" y="0" width="18" height="14" rx="1.5" fill="#1a94e6"/><path d="M.3 1.3 9 7.8 17.7 1.3" fill="none" stroke="#e8f4fd" stroke-width="1.1"/></svg>
<div style="position:absolute;left:841px;top:753px;width:527px;height:1px;background:#dcdcdc;"></div>
</div>
<div style="position:absolute;left:1816px;top:64px;width:40px;height:40px;border-radius:20px 0 0 20px;background:#03103a;"></div>
<svg style="position:absolute;left:1832px;top:78px;" width="8" height="13" viewBox="0 0 8 13"><path d="M1.2 1.2 6.5 6.5 1.2 11.8" fill="none" stroke="#fff" stroke-width="1.3"/></svg>
</body></html>
